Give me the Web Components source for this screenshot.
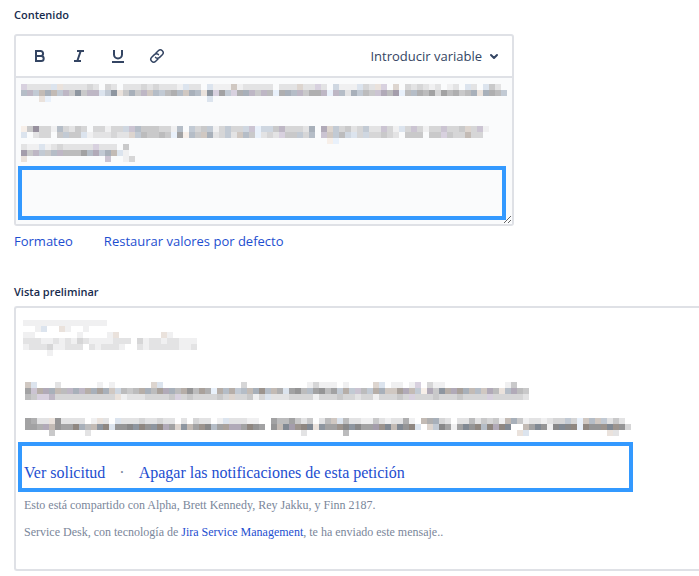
<!DOCTYPE html>
<html lang="es">
<head>
<meta charset="utf-8">
<meta name="viewport" content="width=device-width, initial-scale=1">
<title>Notificaciones</title>
<style>
  body {
    margin: 0;
    background: #fff;
    color: #172b4d;
    font-family: "Open Sans", "Noto Sans", sans-serif;
    overflow-x: hidden;
  }
</style>
</head>
<body>
<notification-form>
  <message-editor slot="editor">
    <masked-text rows="u2222bk22223203202223232221b220b111m1222220222l22u20c111b32ku0l03232120120b20b420|ewdnfndw4h4wwbdhk4f4wmed56emfekhu7du6fw4w5a6few466wawe2fd54vx5ya5e657375645fkf65d|000ka00000000000000000000000000b"></masked-text>
    <masked-text rows="j4z331e3243033133cve444331e0d34d13d33cvacc4w3332f0xld3423d22v31b3v3133v334l3v1|b023304d44b1222322ld54454a7je4mf23d2me4a232u44d3e0vmd5cb3c334320444044u433n33|000000000000000000000000000000000000000000000000000ja"></masked-text>
    <masked-text tight rows="211b12322222u22204|y4wd4ew5557exdfnb1|k0000000000000v0013"></masked-text>
  </message-editor>

  <message-preview slot="preview">
    <masked-text slot="head" rows="11111111111111|001b00k1001"></masked-text>
    <masked-text slot="head" rows="110000000100001k0000000k1|22211212132111122203122122111|12223112220212221002122222112|00001"></masked-text>
    <masked-text slot="body" rows="mb0002000000101000000lb00000000000003000000000013111010000lb01101u0311000000000014|7voxfn5wfwofpfmc545of5pxf5o85p6aoeodenfqen6b785e7857dodv5dofmmpxndjx4hoxpfnemx5kex54|54uuw3333333333k122233334u34333343l33413b22233331333433233133343u333433343333u333332"></masked-text>
    <masked-text slot="body" rows="7622k8222201k20b22232232202032201b22211007557424025mb5221142122610n6f32022524341nf41221233d3amemd242|776xn877rf5nhrb889hr8hrx7lhn7q9e7pxx7r8708niyqrikh77q9h977yqini8rb0ld9717i8rerxri00n7i819i9rar88qiq83|0000400000200000000000000000000000000000000000200000050000000000000000000000000000kb0000000000000k2"></masked-text>
  </message-preview>
</notification-form>

<script>
const CELL = 6;

// 0-9 neutral, a-i cool, j-r warm, s-z purple; a later letter is darker
const families = [
  { from: "0", to: "9", base: 0, tint: [0, 0, 1] },
  { from: "a", to: "i", base: 1, tint: [-7, 1, 11] },
  { from: "j", to: "r", base: 1, tint: [7, -1, -7] },
  { from: "s", to: "z", base: 1, tint: [2, -5, 9] },
];

function cellColor(code) {
  const family = families.find((f) => code >= f.from && code <= f.to);
  const level = code.charCodeAt(0) - family.from.charCodeAt(0) + family.base;
  if (level === 0) return null;
  const value = 253 - level * 13;
  return `rgb(${family.tint.map((t) => Math.min(255, value + t)).join(",")})`;
}

class MaskedText extends HTMLElement {
  constructor() {
    super();
    this.attachShadow({ mode: "open" });
  }
  connectedCallback() {
    const rows = this.getAttribute("rows").split("|");
    const columns = Math.max(...rows.map((row) => row.length));
    let cells = "";
    rows.forEach((row, y) => {
      [...row].forEach((code, x) => {
        const fill = cellColor(code);
        if (fill) {
          cells += `<rect x="${x * CELL}" y="${y * CELL}" width="${CELL}" height="${CELL}" fill="${fill}"/>`;
        }
      });
    });
    this.shadowRoot.innerHTML = `
      <style>
        :host { display: block; }
        svg { display: block; }
      </style>
      <svg width="${columns * CELL}" height="${rows.length * CELL}" shape-rendering="crispEdges" aria-hidden="true">${cells}</svg>
    `;
  }
}

class ToolButton extends HTMLElement {
  constructor() {
    super();
    this.attachShadow({ mode: "open" });
  }
  connectedCallback() {
    this.shadowRoot.innerHTML = `
      <style>
        :host { display: block; }
        button {
          display: flex;
          align-items: center;
          justify-content: center;
          width: 24px;
          height: 24px;
          padding: 0;
          border: 0;
          border-radius: 3px;
          background: none;
          color: #344563;
          cursor: pointer;
        }
        button:hover { background: #ebecf0; }
      </style>
      <button type="button" aria-label="${this.getAttribute("label")}"><slot></slot></button>
    `;
  }
}

class MessageEditor extends HTMLElement {
  constructor() {
    super();
    this.attachShadow({ mode: "open" });
  }
  connectedCallback() {
    this.shadowRoot.innerHTML = `
      <style>
        :host {
          display: block;
          box-sizing: border-box;
          max-width: 500px;
          border: 2px solid #dfe1e6;
          border-radius: 3px;
          overflow: hidden;
        }
        .toolbar {
          display: flex;
          align-items: center;
          gap: 15px;
          height: 40px;
          padding: 0 12px;
          border-bottom: 2px solid #dfe1e6;
        }
        .variable {
          display: flex;
          align-items: center;
          gap: 6px;
          margin-left: auto;
          padding: 0;
          border: 0;
          background: none;
          color: #344563;
          font: 13px/20px "Open Sans", "Noto Sans", sans-serif;
          cursor: pointer;
        }
        svg { display: block; }
        .field {
          display: grid;
          grid-template-columns: minmax(0, 1fr);
          background: #fafbfc;
        }
        textarea, .content { grid-area: 1 / 1; }
        textarea {
          box-sizing: border-box;
          width: 100%;
          min-height: 146px;
          padding: 6px;
          border: 0;
          outline: 0;
          background: none;
          resize: vertical;
        }
        .content {
          display: flex;
          flex-direction: column;
          padding: 6px 6px 4px 2px;
          pointer-events: none;
        }
        ::slotted(masked-text) {
          margin: 0 0 24px 3px;
        }
        ::slotted(masked-text[tight]) {
          margin: -24px 0 4px 3px;
        }
        .mark {
          flex: 1;
          border: 4px solid #3399ff;
        }
      </style>
      <div class="toolbar">
        <tool-button label="Negrita">
          <svg width="14" height="14" viewBox="0 0 14 14" fill="none" stroke="currentColor" stroke-width="2"><path d="M3 2h4.6a2.4 2.4 0 0 1 0 5H3zM3 7h5.2a2.5 2.5 0 0 1 0 5H3z"/></svg>
        </tool-button>
        <tool-button label="Cursiva">
          <svg width="14" height="14" viewBox="0 0 14 14" fill="none" stroke="currentColor" stroke-width="2"><path d="M5 2h7M2 12h7M8.7 2 5.3 12"/></svg>
        </tool-button>
        <tool-button label="Subrayado">
          <svg width="14" height="14" viewBox="0 0 14 14" fill="none" stroke="currentColor" stroke-width="2"><path d="M3 1v4.5a4 4 0 0 0 8 0V1M1 13h12"/></svg>
        </tool-button>
        <tool-button label="Enlace">
          <svg width="16" height="16" viewBox="0 0 16 16" fill="none" stroke="currentColor" stroke-width="1.5" stroke-linecap="round"><path d="m7 5 2.3-2.3a2.8 2.8 0 0 1 4 4L10.6 9.4a2.8 2.8 0 0 1-4 0M9 11l-2.3 2.3a2.8 2.8 0 0 1-4-4L5.4 6.6a2.8 2.8 0 0 1 4 0"/></svg>
        </tool-button>
        <button class="variable" type="button">Introducir variable
          <svg width="12" height="12" viewBox="0 0 12 12" fill="none" stroke="currentColor" stroke-width="2" stroke-linecap="round" stroke-linejoin="round"><path d="m3 5 3 3 3-3"/></svg>
        </button>
      </div>
      <div class="field">
        <textarea aria-label="Contenido"></textarea>
        <div class="content">
          <slot></slot>
          <div class="mark"></div>
        </div>
      </div>
    `;
  }
}

class MessagePreview extends HTMLElement {
  constructor() {
    super();
    this.attachShadow({ mode: "open" });
  }
  connectedCallback() {
    this.shadowRoot.innerHTML = `
      <style>
        :host {
          display: block;
          padding: 12px 66px 29px 2px;
          border: 2px solid #dfe1e6;
          border-right: 0;
          border-radius: 3px 0 0 3px;
          color: #7a869a;
          font: 12px/16px "Liberation Serif", "Times New Roman", serif;
        }
        a { color: #1d4ed0; text-decoration: none; }
        a:hover { text-decoration: underline; }
        .head { padding-left: 5px; }
        .body {
          display: flex;
          flex-direction: column;
          gap: 18px;
          padding: 26px 0 6px 7px;
        }
        .actions {
          display: flex;
          gap: 14px;
          padding: 18px 2px 6px;
          border: 4px solid #3399ff;
          font-size: 16px;
          line-height: 18px;
        }
        p { margin: 0 0 0 6px; }
        p + p { margin-top: 11px; }
        .shared { margin-top: 5px; }
      </style>
      <div class="head"><slot name="head"></slot></div>
      <div class="body"><slot name="body"></slot></div>
      <div class="actions">
        <a href="#solicitud">Ver solicitud</a>
        <span>·</span>
        <a href="#notificaciones">Apagar las notificaciones de esta petición</a>
      </div>
      <p class="shared">Esto está compartido con Alpha, Brett Kennedy, Rey Jakku, y Finn 2187.</p>
      <p>Service Desk, con tecnología de <a href="#jira">Jira Service Management</a>, te ha enviado este mensaje..</p>
    `;
  }
}

class NotificationForm extends HTMLElement {
  constructor() {
    super();
    this.attachShadow({ mode: "open" });
  }
  connectedCallback() {
    this.shadowRoot.innerHTML = `
      <style>
        :host {
          display: block;
          padding: 7px 0 5px 14px;
        }
        h2 {
          margin: 0;
          font-size: 11px;
          font-weight: 600;
          line-height: 16px;
        }
        .content { margin-bottom: 11px; }
        .preview { margin-bottom: 6px; }
        nav {
          display: flex;
          gap: 31px;
          margin: 5px 0 33px;
          font-size: 13px;
          line-height: 20px;
        }
        a { color: #1d4ed0; text-decoration: none; }
        a:hover { text-decoration: underline; }
      </style>
      <h2 class="content">Contenido</h2>
      <slot name="editor"></slot>
      <nav>
        <a href="#formateo">Formateo</a>
        <a href="#restaurar">Restaurar valores por defecto</a>
      </nav>
      <h2 class="preview">Vista preliminar</h2>
      <slot name="preview"></slot>
    `;
  }
}

customElements.define("masked-text", MaskedText);
customElements.define("tool-button", ToolButton);
customElements.define("message-editor", MessageEditor);
customElements.define("message-preview", MessagePreview);
customElements.define("notification-form", NotificationForm);
</script>
</body>
</html>
